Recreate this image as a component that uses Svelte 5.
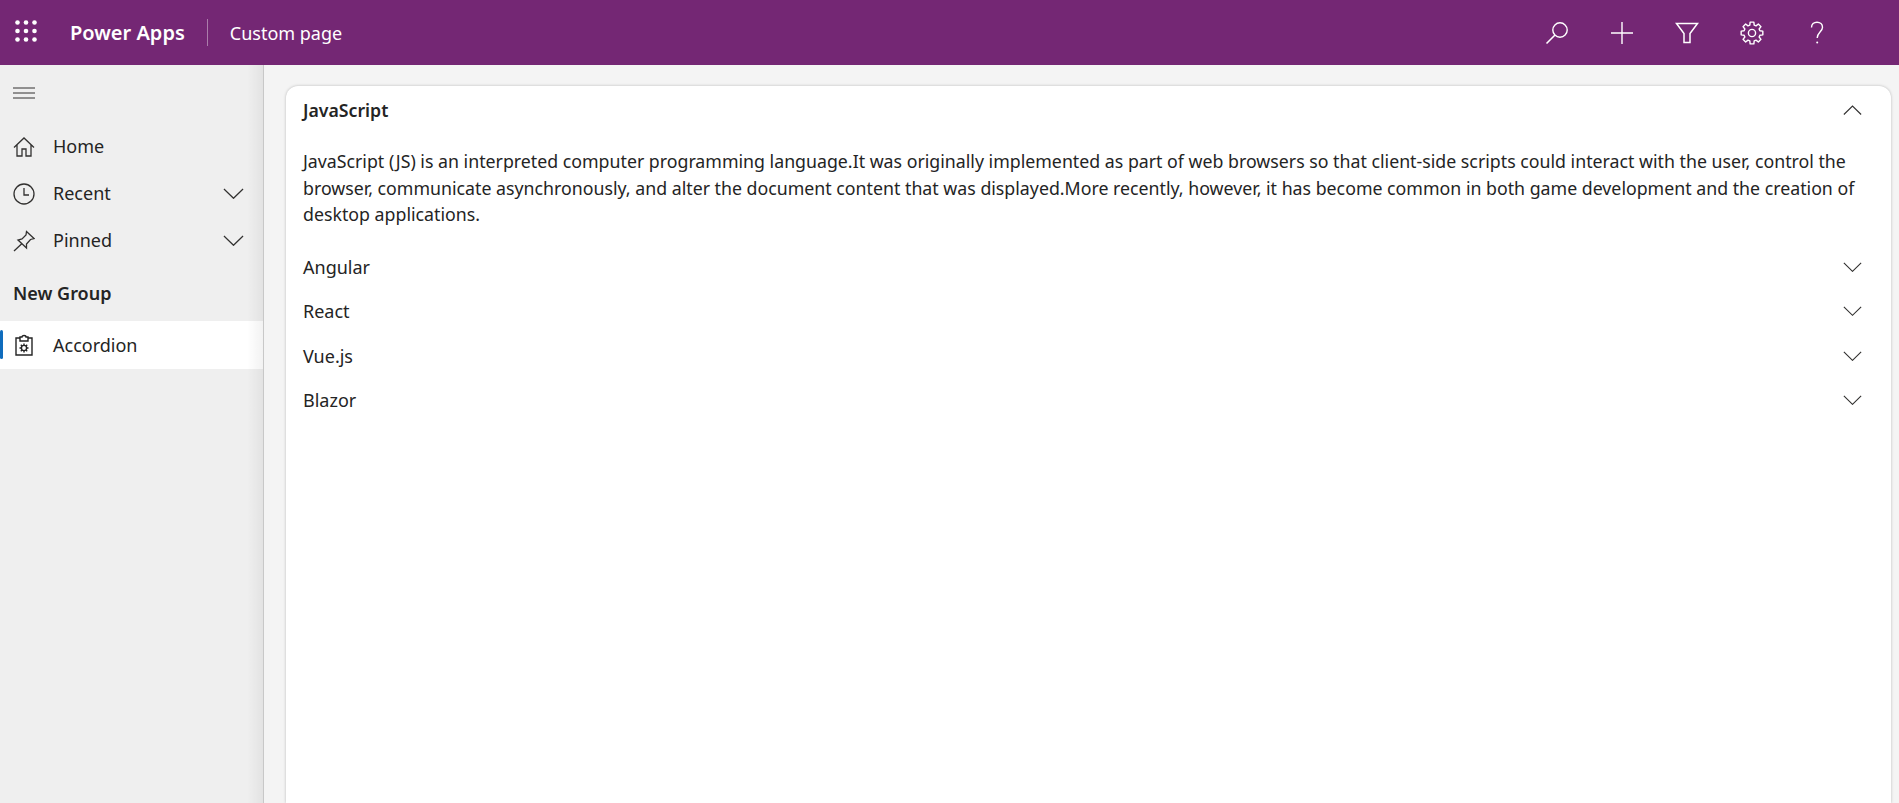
<script>
	const sections = [
		{ title: 'JavaScript', open: true, body: 'JavaScript (JS) is an interpreted computer programming language.It was originally implemented as part of web browsers so that client-side scripts could interact with the user, control the browser, communicate asynchronously, and alter the document content that was displayed.More recently, however, it has become common in both game development and the creation of desktop applications.' },
		{ title: 'Angular' },
		{ title: 'React' },
		{ title: 'Vue.js' },
		{ title: 'Blazor' }
	];

	// 8 toothed gear outline for the settings icon
	function gearPath(cx, cy, outer, inner) {
		const pts = [];
		for (let i = 0; i < 8; i++) {
			const a = (i * Math.PI) / 4;
			for (const [off, r] of [[-0.27, inner], [-0.17, outer], [0.17, outer], [0.27, inner]]) {
				pts.push(`${(cx + r * Math.sin(a + off)).toFixed(2)} ${(cy - r * Math.cos(a + off)).toFixed(2)}`);
			}
		}
		return 'M' + pts.join(' L') + ' Z';
	}
</script>

{#snippet chevron(up, width)}
	<svg class="chevron" viewBox="0 0 22 12" {width} height={(width * 12) / 22} preserveAspectRatio="none">
		<path d={up ? 'M1 11 L11 1.2 L21 11' : 'M1 1 L11 10.8 L21 1'} fill="none" stroke="#323130" stroke-width="1.3" />
	</svg>
{/snippet}

<div class="page">
	<header class="topbar">
		<svg class="waffle" viewBox="0 0 22 22" width="22" height="22">
			{#each [2.5, 11, 19.5] as y}
				{#each [2.5, 11, 19.5] as x}
					<circle cx={x} cy={y} r="2.3" fill="#fff" />
				{/each}
			{/each}
		</svg>
		<span class="brand">Power Apps</span>
		<span class="divider"></span>
		<span class="page-name">Custom page</span>
		<div class="actions">
			<svg viewBox="0 0 24 24" width="24" height="24" fill="none" stroke="#fff" stroke-width="1.4">
				<circle cx="15" cy="9" r="7.2" />
				<path d="M10 14 L1.5 22.5" stroke-width="1.6" />
			</svg>
			<svg viewBox="0 0 24 24" width="24" height="24" fill="none" stroke="#fff" stroke-width="1.4">
				<path d="M12 1 V23 M1 12 H23" />
			</svg>
			<svg viewBox="0 0 24 24" width="24" height="24" fill="none" stroke="#fff" stroke-width="1.5">
				<path d="M1.5 2.5 H22.5 L15 12.5 V21.5 H9 V12.5 Z" />
			</svg>
			<svg viewBox="0 0 24 24" width="24" height="24" fill="none" stroke="#fff" stroke-width="1.4">
				<circle cx="12" cy="12" r="3.6" />
				<path d={gearPath(12, 12, 11, 8.2)} stroke-linejoin="round" />
			</svg>
			<svg viewBox="0 0 24 24" width="24" height="24" fill="none" stroke="#fff" stroke-width="1.4">
				<path d="M6.5 6.5 C6.5 3.2 8.8 1.2 12 1.2 C15.2 1.2 17.5 3.3 17.5 6.2 C17.5 10.8 12.2 11.5 12.2 17" />
				<circle cx="12.2" cy="21.5" r="1" fill="#fff" stroke="none" />
			</svg>
		</div>
	</header>

	<div class="main">
		<nav class="sidebar">
			<button class="hamburger" aria-label="Toggle navigation">
				<svg viewBox="0 0 22 12" width="22" height="12" fill="none" stroke="#323130" stroke-width="1">
					<path d="M0 1 H22 M0 6 H22 M0 11 H22" />
				</svg>
			</button>
			<div class="nav-item">
				<svg class="nav-icon" viewBox="0 0 22 22" width="22" height="22" fill="none" stroke="#323130" stroke-width="1.3">
					<path d="M1 11.5 L11 2 L21 11.5 M4 9 V20 H9 V13 H13 V20 H18 V9" />
				</svg>
				<span class="nav-label">Home</span>
			</div>
			<div class="nav-item">
				<svg class="nav-icon" viewBox="0 0 22 22" width="22" height="22" fill="none" stroke="#323130" stroke-width="1.3">
					<circle cx="11" cy="11" r="10" />
					<path d="M11 5 V12 H16" />
				</svg>
				<span class="nav-label">Recent</span>
				{@render chevron(false, 21)}
			</div>
			<div class="nav-item">
				<svg class="nav-icon" viewBox="0 0 22 22" width="22" height="22" fill="none" stroke="#323130" stroke-width="1.3">
					<path d="M13.5 1.5 L21 8.5 L17.5 9.5 L13.5 14 L13.5 18 L5 10 L9 9 L13 5 Z M8.5 14 L1 21" />
				</svg>
				<span class="nav-label">Pinned</span>
				{@render chevron(false, 21)}
			</div>
			<div class="group-title">New Group</div>
			<div class="nav-item active">
				<svg class="nav-icon" viewBox="0 0 22 22" width="22" height="22" fill="none" stroke="#242424" stroke-width="1.4">
					<path d="M7 4 H3 V21 H19 V4 H15 M7 7 V3 H9 C9 1 13 1 13 3 H15 V7 Z" />
					<circle cx="11" cy="14" r="2.6" />
					<path d="M11 9.5 V11 M11 17 V18.5 M6.5 14 H8 M14 14 H15.5 M7.8 10.8 L9 12 M13 16 L14.2 17.2 M14.2 10.8 L13 12 M9 16 L7.8 17.2" />
				</svg>
				<span class="nav-label">Accordion</span>
			</div>
		</nav>

		<main class="content">
			<section class="card">
				{#each sections as section}
					<div class="acc-head" class:open={section.open}>
						<span class="acc-title">{section.title}</span>
						{@render chevron(section.open, 19)}
					</div>
					{#if section.body}
						<p class="acc-body">{section.body}</p>
					{/if}
				{/each}
			</section>
		</main>
	</div>
</div>

<style>
	:global(body) {
		margin: 0;
		background: #f4f4f4;
		overflow: hidden;
	}

	.page {
		height: 803px;
		display: flex;
		flex-direction: column;
		font-family: "Noto Sans", "Open Sans", sans-serif;
		color: #242424;
	}

	.topbar {
		height: 65px;
		flex: none;
		background: #742774;
		color: #fff;
		display: flex;
		align-items: center;
		padding-left: 15px;
	}

	.waffle {
		margin-top: -3px;
	}

	.brand {
		margin-left: 33px;
		font-size: 20px;
		font-weight: 600;
	}

	.divider {
		width: 1px;
		height: 27px;
		margin: 0 22px 0 22px;
		background: rgba(255, 255, 255, 0.4);
	}

	.page-name {
		font-size: 18px;
	}

	.actions {
		margin-left: auto;
		margin-right: 70px;
		display: flex;
		gap: 41px;
	}

	.main {
		flex: 1;
		display: flex;
		min-height: 0;
	}

	.sidebar {
		width: 263px;
		flex: none;
		background: #efefef;
		border-right: 1px solid #c8c8c8;
		position: relative;
	}

	/* soft shade along the inner edge, it also falls on the active row */
	.sidebar::after {
		content: '';
		position: absolute;
		top: 0;
		right: 0;
		bottom: 0;
		width: 16px;
		background: linear-gradient(to right, rgba(0, 0, 0, 0), rgba(0, 0, 0, 0.05));
		pointer-events: none;
	}

	.hamburger {
		display: block;
		padding: 0;
		margin: 22px 0 22px 13px;
		height: 14px;
		border: 0;
		background: none;
	}

	.nav-item {
		height: 47px;
		display: flex;
		align-items: center;
		padding-left: 13px;
		padding-right: 19px;
		font-size: 18px;
	}

	.nav-icon {
		flex: none;
		margin-right: 18px;
	}

	.nav-label {
		flex: 1;
		line-height: 1;
		margin-top: -1px;
	}

	.group-title {
		height: 57px;
		display: flex;
		align-items: center;
		padding-left: 13px;
		font-size: 18px;
		font-weight: 600;
	}

	.active {
		height: 48px;
		background: #fff;
		position: relative;
	}

	.active::before {
		content: '';
		position: absolute;
		left: 0;
		top: 9px;
		bottom: 10px;
		width: 3px;
		background: #0f6cbd;
		border-radius: 2px;
	}

	.content {
		flex: 1;
		padding: 21px 8px 0 22px;
		min-width: 0;
	}

	.card {
		height: 100%;
		background: #fff;
		border-radius: 12px 12px 0 0;
		box-shadow: 0 0 3px rgba(0, 0, 0, 0.25);
		box-sizing: border-box;
		padding: 0 29px 0 17px;
	}

	.acc-head {
		height: 44.4px;
		display: flex;
		align-items: center;
		justify-content: space-between;
		font-size: 18px;
	}

	.acc-head.open {
		height: 48px;
	}

	.acc-head.open .acc-title {
		font-weight: 600;
		font-size: 17.7px;
	}

	.acc-body {
		margin: 14px -13px 17px 0;
		font-size: 17.75px;
		line-height: 26.6px;
	}
</style>
